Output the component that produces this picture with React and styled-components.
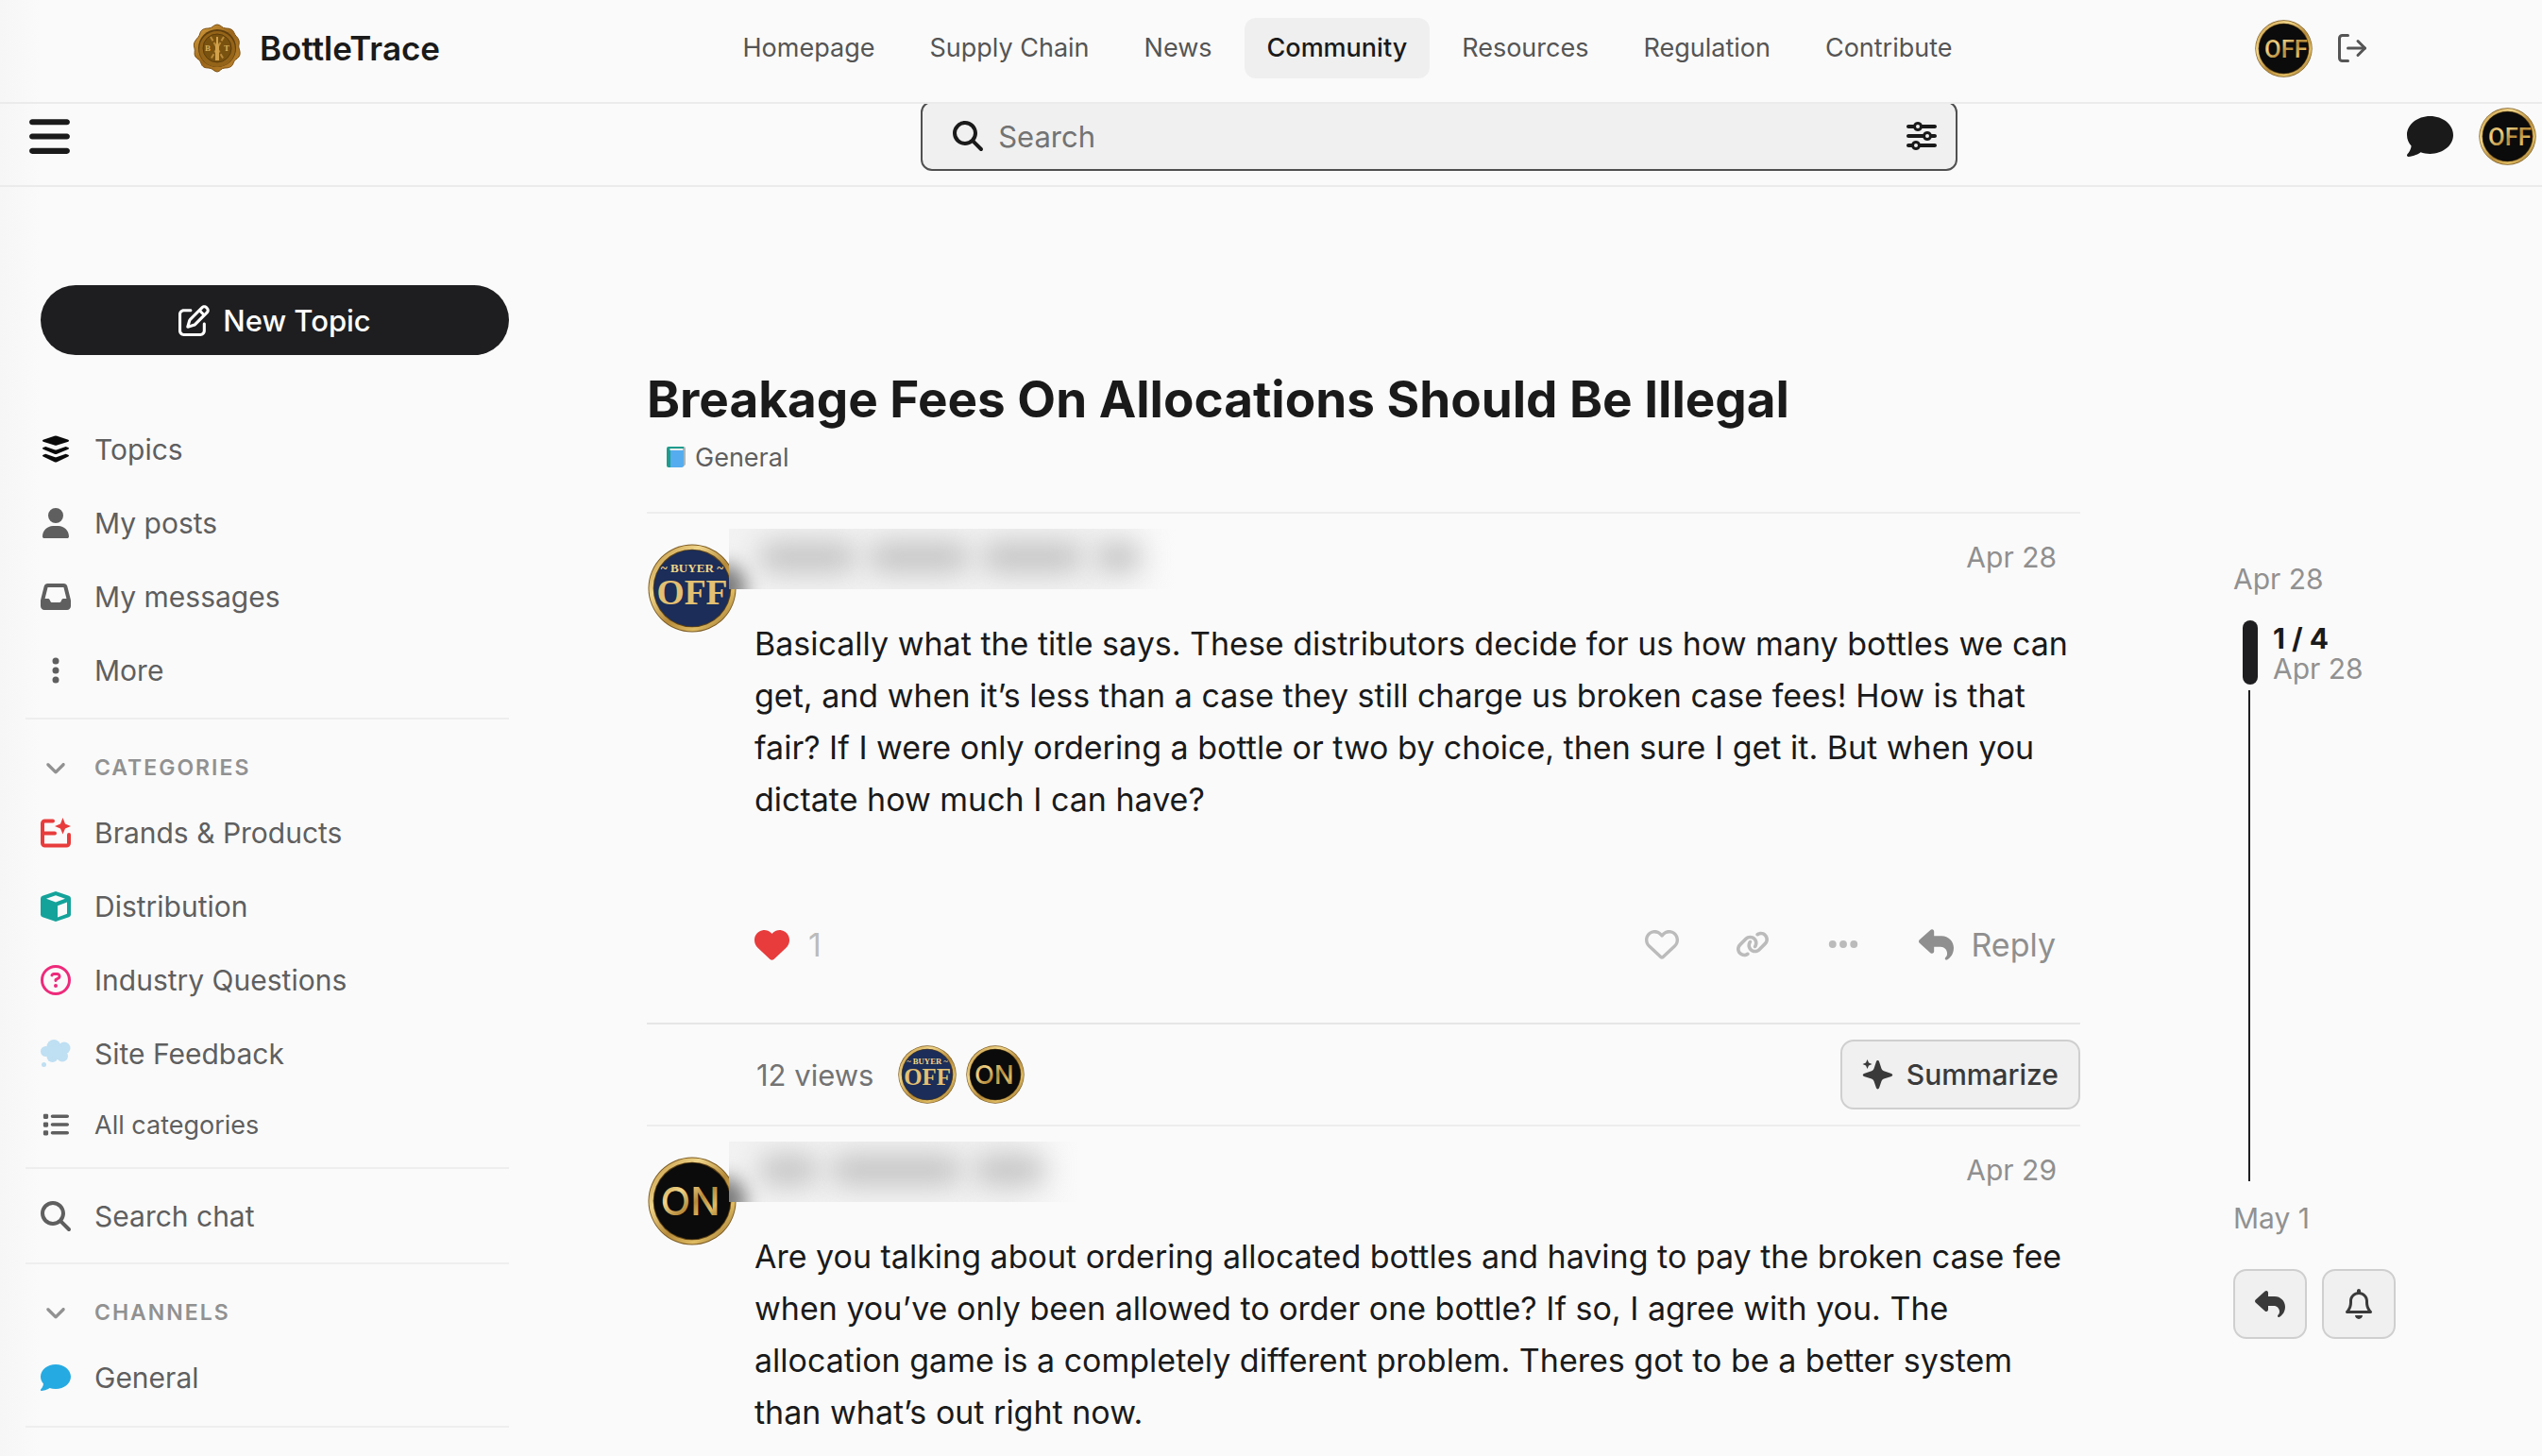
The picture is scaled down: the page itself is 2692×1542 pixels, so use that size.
import React, { useId, useState } from "react";
import styled, { createGlobalStyle } from "styled-components";
import { LogOut } from "lucide-react";
import {
  FaAngleDown,
  FaBars,
  FaComment,
  FaEllipsis,
  FaEllipsisVertical,
  FaHeart,
  FaInbox,
  FaLink,
  FaList,
  FaMagnifyingGlass,
  FaRegBell,
  FaRegCircleQuestion,
  FaRegHeart,
  FaRegPenToSquare,
  FaReply,
  FaSliders,
  FaUser,
} from "react-icons/fa6";

const GlobalStyle = createGlobalStyle`
  *, *::before, *::after {
    box-sizing: border-box;
  }
  body {
    margin: 0;
    background: #fafafa;
    color: #1a1a1a;
    font-family: Inter, "Liberation Sans", sans-serif;
    font-size: 30px;
  }
  button, input {
    font: inherit;
    color: inherit;
  }
  button {
    padding: 0;
    border: 0;
    background: none;
    cursor: pointer;
  }
  a {
    color: inherit;
    text-decoration: none;
  }
  svg {
    display: block;
    flex-shrink: 0;
  }
`;

const Page = styled.div`
  min-height: 100vh;
  background: linear-gradient(to right, #f6f6f6, #fafafa 42px);
`;

const SiteHeader = styled.header`
  position: relative;
  z-index: 2;
  display: flex;
  align-items: center;
  justify-content: space-between;
  height: 110px;
  padding: 0 167px 6px 204px;
  border-bottom: 2px solid #ebebeb;
  background: linear-gradient(to right, #f6f6f6, #fafafa 42px);
`;

const Brand = styled.a`
  display: flex;
  align-items: center;
  gap: 19px;
  font-size: 35px;
  font-weight: 600;
`;

const SiteNav = styled.nav`
  display: flex;
  gap: 10px;
`;

const NavLink = styled.a`
  padding: 0 24px;
  border-radius: 12px;
  background: ${({ $active }) => ($active ? "#efefef" : "transparent")};
  color: ${({ $active }) => ($active ? "#1a1a1a" : "#555")};
  font-size: 27px;
  font-weight: ${({ $active }) => ($active ? 500 : 400)};
  line-height: 64px;
`;

const SiteUser = styled.div`
  display: flex;
  align-items: center;
  gap: 8px;
`;

const LogoutButton = styled.button`
  padding: 14px 16px;
  color: #555;
`;

const ForumHeader = styled.header`
  display: flex;
  align-items: center;
  justify-content: space-between;
  height: 88px;
  padding: 0 6px 18px 28px;
  border-bottom: 2px solid #ebebeb;
`;

const HeaderSide = styled.div`
  flex: ${({ $grow }) => $grow} 1 0;
  display: flex;
  align-items: center;
  justify-content: ${({ $end }) => ($end ? "flex-end" : "flex-start")};
  gap: 27px;
`;

const SearchBox = styled.form`
  flex: 0 1 1098px;
  display: flex;
  align-items: center;
  gap: 16px;
  height: 74px;
  padding: 0 20px 0 32px;
  border: 2px solid #505050;
  border-radius: 12px;
  background: #f0f0f0;
`;

const SearchInput = styled.input`
  flex: 1;
  min-width: 0;
  padding: 0;
  border: 0;
  outline: 0;
  background: none;
  font-size: 31px;
  &::placeholder {
    color: #737373;
    opacity: 1;
  }
`;

const Layout = styled.div`
  display: grid;
  grid-template-columns: 539px 1fr;
`;

const Sidebar = styled.aside`
  padding: 104px 0 0 27px;
`;

const NewTopicButton = styled.button`
  display: flex;
  align-items: center;
  justify-content: center;
  gap: 14px;
  width: calc(100% - 16px);
  height: 74px;
  margin: 0 0 61px 16px;
  border-radius: 37px;
  background: #1e1e20;
  color: #fff;
  font-size: 31px;
  font-weight: 500;
`;

const SidebarSection = styled.section`
  padding: ${({ $pad }) => $pad || "0"};
  border-bottom: 2px solid #eee;
`;

const SidebarHeading = styled.button`
  display: grid;
  grid-template-columns: 32px 1fr;
  align-items: center;
  gap: 25px;
  width: 100%;
  height: 60px;
  padding-left: 16px;
  color: #919191;
  font-size: 23px;
  font-weight: 600;
  letter-spacing: 2px;
  text-align: left;
  text-transform: uppercase;
`;

const SidebarLink = styled.a`
  display: grid;
  grid-template-columns: 32px 1fr;
  align-items: center;
  gap: 25px;
  height: ${({ $small }) => ($small ? "72px" : "78px")};
  padding-left: 16px;
  color: #5f5f5f;
  font-size: ${({ $small }) => ($small ? "27px" : "30px")};
`;

const IconSlot = styled.span`
  display: flex;
  justify-content: center;
  color: ${({ $color }) => $color || "inherit"};
`;

const Main = styled.main`
  display: grid;
  grid-template-columns: 1fr 172px;
  gap: 162px;
  padding: 0 155px 0 146px;
`;

const Topic = styled.article`
  min-width: 0;
  padding-top: 189px;
`;

const TopicTitle = styled.h1`
  margin: 0;
  font-size: 53px;
  font-weight: 700;
  line-height: 72px;
`;

const Category = styled.a`
  display: flex;
  align-items: center;
  gap: 10px;
  height: 36px;
  margin: 7px 0 40px 21px;
  color: #5f5f5f;
  font-size: 27px;
`;

const Post = styled.section`
  display: grid;
  grid-template-columns: 95px 1fr;
  gap: 19px;
  border-top: 2px solid #ededed;
`;

const AvatarLink = styled.a`
  display: flex;
  justify-content: flex-end;
  padding-top: 32px;
`;

const PostMain = styled.div`
  min-width: 0;
  padding-top: 16px;
`;

const PostMeta = styled.div`
  display: flex;
  justify-content: space-between;
  height: 64px;
  padding-right: 25px;
  color: #8f8f8f;
  line-height: 60px;
`;

const HiddenName = styled.div`
  position: relative;
  display: flex;
  align-items: center;
  gap: 12px;
  margin-left: -27px;
  padding: 0 36px 4px 31px;
  overflow: hidden;
  background: linear-gradient(to right, #f2f2f2 80%, #fafafa);
  &::before {
    content: "";
    position: absolute;
    left: -26px;
    bottom: -22px;
    width: 44px;
    height: 48px;
    border-radius: 50%;
    background: #777;
    filter: blur(10px);
  }
`;

const HiddenWord = styled.span`
  width: ${({ $width }) => $width}px;
  height: 34px;
  border-radius: 17px;
  background: #c6c6c6;
  filter: blur(14px);
`;

const PostBody = styled.p`
  margin: 30px 0 0;
  padding-right: 8px;
  font-size: 34px;
  line-height: 55px;
`;

const PostActions = styled.div`
  display: flex;
  align-items: center;
  height: 54px;
  margin: 99px 0 56px;
  padding-right: 26px;
  color: #bbb;
`;

const Likes = styled.button`
  display: flex;
  align-items: center;
  gap: 20px;
  margin-right: auto;
  font-size: 34px;
`;

const ActionButton = styled.button`
  display: flex;
  align-items: center;
  justify-content: center;
  width: 96px;
  height: 54px;
`;

const ReplyButton = styled.button`
  display: flex;
  align-items: center;
  gap: 18px;
  margin-left: 32px;
  color: #8f8f8f;
  font-size: 34px;
`;

const TopicStats = styled.div`
  display: flex;
  align-items: center;
  gap: 10px;
  padding: 16px 0 16px 116px;
  border-top: 2px solid #e6e6e6;
  color: #737373;
`;

const Views = styled.span`
  margin-right: 16px;
  font-size: 31px;
`;

const SummarizeButton = styled.button`
  display: flex;
  align-items: center;
  gap: 14px;
  height: 74px;
  margin-left: auto;
  padding: 0 21px;
  border: 2px solid #cfcfcf;
  border-radius: 14px;
  background: #f0f0f0;
  color: #3a3a3a;
  font-weight: 500;
`;

const Timeline = styled.aside`
  padding-top: 396px;
  color: #919191;
  line-height: 38px;
`;

const TimelineDate = styled.a`
  display: block;
`;

const Scroller = styled.div`
  display: flex;
  gap: 16px;
  height: 68px;
  margin: 25px 0 6px 10px;
  line-height: 32px;
`;

const ScrollerHandle = styled.div`
  width: 16px;
  border-radius: 8px;
  background: #1e1e20;
`;

const ScrollerText = styled.div`
  padding-top: 3px;
  strong {
    display: block;
    color: #1a1a1a;
    font-weight: 700;
  }
`;

const Track = styled.div`
  width: 2px;
  height: 520px;
  margin: 0 0 20px 16px;
  background: #1e1e20;
`;

const TimelineButtons = styled.div`
  display: grid;
  grid-template-columns: 1fr 1fr;
  gap: 16px;
  margin-top: 35px;
`;

const TimelineButton = styled.button`
  display: flex;
  align-items: center;
  justify-content: center;
  height: 74px;
  border: 2px solid #cfcfcf;
  border-radius: 14px;
  background: #f0f0f0;
  color: #3a3a3a;
`;

// Gold rimmed coin used for every user picture
function Avatar({ kind, size }) {
  const id = useId();
  const gold = `url(#${id})`;
  return (
    <svg width={size} height={size} viewBox="0 0 100 100" role="img" aria-label={`${kind} avatar`}>
      <defs>
        <linearGradient id={id} x1="0" y1="0" x2="1" y2="1">
          <stop offset="0" stopColor="#b98a35" />
          <stop offset="0.3" stopColor="#f0d58a" />
          <stop offset="0.55" stopColor="#b58a3a" />
          <stop offset="0.75" stopColor="#dfbb62" />
          <stop offset="1" stopColor="#8a6220" />
        </linearGradient>
      </defs>
      <circle cx="50" cy="50" r="49.5" fill="#7b5a22" />
      <circle cx="50" cy="50" r="48.5" fill={gold} />
      <circle cx="50" cy="50" r="44" fill="#5e4214" />
      <circle cx="50" cy="50" r="43" fill={kind === "buyer" ? "#1b2d58" : "#0b0b0b"} />
      {kind === "buyer" && (
        <g fill="#f0d488" fontFamily="Liberation Serif, serif" fontWeight="700" textAnchor="middle">
          <text x="50" y="32" fontSize="14">~ BUYER ~</text>
          <text x="50" y="68" fontSize="40" fill="#e3c072">OFF</text>
        </g>
      )}
      {kind === "off" && (
        <text x="54" y="65" fontSize="42" fontFamily="Roboto, sans-serif" fontWeight="500" textAnchor="middle" fill={gold}>
          OFF
        </text>
      )}
      {kind === "on" && (
        <text x="48" y="66" fontSize="44" fontFamily="Inter, sans-serif" fontWeight="500" textAnchor="middle" fill={gold}>
          ON
        </text>
      )}
    </svg>
  );
}

function SealLogo() {
  return (
    <svg width="52" height="52" viewBox="0 0 52 52" aria-hidden="true">
      <defs>
        <linearGradient id="seal" x1="0" y1="0" x2="1" y2="1">
          <stop offset="0" stopColor="#d9a343" />
          <stop offset="0.5" stopColor="#9a6519" />
          <stop offset="1" stopColor="#c08830" />
        </linearGradient>
      </defs>
      <path
        d="M26 1c4 0 5 4 9 4s8 1 9 5c1 3 4 4 5 8s-1 5 0 8 2 6 0 9-5 3-6 7-5 5-9 5-5 4-8 4-5-4-9-4-7-1-8-5-4-4-6-7 0-6-1-9-1-5 1-8 4-4 5-8 5-5 9-5 5-4 9-4z"
        fill="url(#seal)"
        stroke="#7b4f10"
        strokeWidth="1"
      />
      <circle cx="26" cy="26" r="20" fill="#5f3f0e" />
      <circle cx="26" cy="27" r="19" fill="#946419" />
      <circle cx="26" cy="26" r="15" fill="#7a520f" stroke="#5d3d0b" strokeWidth="1" />
      <path d="M19 14l14 24M33 14L19 38" stroke="#b98a3a" strokeWidth="2" strokeDasharray="5 2" />
      <path d="M24 39V24l1-4v-6h2v6l1 4v15z" fill="#d3a14a" />
      <g fill="#d9ac58" fontFamily="Liberation Serif, serif" fontWeight="700" fontSize="9">
        <text x="13" y="29">B</text>
        <text x="33" y="29">T</text>
      </g>
    </svg>
  );
}

function LayersIcon() {
  return (
    <svg width="32" height="32" viewBox="40 28 96 96" fill="currentColor" aria-hidden="true">
      <path d="M84 33.500q4-1.500 8 0l36 12q5 3 0 6L92 62.500q-4 1.500-8 0L48 51.500q-5-3 0-6z" />
      <path d="M56 67l28 10q4 1.500 8 0l28-10 8 3q5 2.500 0 5.500L92 90q-4 1.500-8 0L48 75.500q-5-3 0-5.500z" />
      <path d="M56 90l28 10q4 1.500 8 0l28-10 8 3q5 2.500 0 5.500L92 116q-4 1.500-8 0L48 98.500q-5-3 0-5.500z" />
    </svg>
  );
}

function BrandsIcon() {
  return (
    <svg width="32" height="32" viewBox="0 0 32 32" aria-hidden="true">
      <path
        d="M13 3.500H4.500a2.500 2.500 0 0 0-2.500 2.500v21a2.500 2.500 0 0 0 2.500 2.500h23a2.500 2.500 0 0 0 2.500-2.500V18M2 16.500h13"
        fill="none"
        stroke="#e83c3c"
        strokeWidth="4"
        strokeLinecap="round"
        strokeLinejoin="round"
      />
      <path d="M23.500 0l2.500 6.500 6 2.500-6 2.500-2.500 6-2.500-6L15 9l6-2.500z" fill="#e83c3c" />
    </svg>
  );
}

function CubeIcon() {
  return (
    <svg width="32" height="32" viewBox="0 0 32 32" aria-hidden="true">
      <path
        d="M16 0l14 4.800a3 3 0 0 1 2 2.800v16.800a3 3 0 0 1-2 2.800L16 32 2 27.200a3 3 0 0 1-2-2.800V7.600a3 3 0 0 1 2-2.800z"
        fill="#14a39a"
      />
      <path d="M16 4.200l10 3.600-10 3.700L6 7.800z" fill="#fafafa" />
      <path d="M18 15.200l10-3.600v12.200l-10 3.600z" fill="#fafafa" />
    </svg>
  );
}

function ThoughtIcon() {
  return (
    <svg width="32" height="32" viewBox="0 0 32 32" fill="#bfdff2" aria-hidden="true">
      <circle cx="14" cy="8.500" r="7.500" />
      <circle cx="5.500" cy="13.500" r="5.500" />
      <circle cx="25" cy="10" r="6.500" />
      <circle cx="23" cy="18.500" r="6" />
      <circle cx="12.500" cy="19" r="6" />
      <circle cx="16" cy="14" r="8" />
      <circle cx="3.500" cy="27.500" r="2.500" />
    </svg>
  );
}

function BookIcon() {
  return (
    <svg width="20" height="22" viewBox="0 0 20 22" aria-hidden="true">
      <path d="M2 0h16a2 2 0 0 1 2 2v17l-2 2H2z" fill="#a9b8bf" />
      <path d="M3 2h14v3H3z" fill="#e8edf0" />
      <path d="M3 4h15v16a2 2 0 0 1-2 2H3z" fill="#55acee" />
      <path d="M2 0a2 2 0 0 0-2 2v18a2 2 0 0 0 2 2h2V4c-1 0-1-2 0-2h14V0z" fill="#1f9c8c" />
    </svg>
  );
}

function SparklesIcon() {
  return (
    <svg width="33" height="32" viewBox="0 0 33 32" fill="currentColor" aria-hidden="true">
      <path d="M16.500 1c1 0 1.300.600 1.600 1.500l2.400 7.200c.500 1.300 1.200 2 2.500 2.500l8 2.700c1.700.600 1.700 2.400 0 3l-8 2.500c-1.300.500-2 1.200-2.500 2.500l-2.400 7.200c-.600 1.800-2.600 1.800-3.200 0l-2.400-7.200c-.500-1.300-1.200-2-2.500-2.500l-8-2.500c-1.700-.600-1.700-2.400 0-3l8-2.700c1.300-.500 2-1.200 2.500-2.500l2.400-7.200C15.200 1.600 15.500 1 16.500 1z" />
      <path d="M5.500 0l1.500 3.500L10.500 5 7 6.500 5.500 10 4 6.500.500 5 4 3.500z" />
    </svg>
  );
}

const NAV = ["Homepage", "Supply Chain", "News", "Community", "Resources", "Regulation", "Contribute"];

const MAIN_LINKS = [
  { label: "Topics", icon: <LayersIcon />, color: "#0a0a0a" },
  { label: "My posts", icon: <FaUser size={32} /> },
  { label: "My messages", icon: <FaInbox size={32} /> },
  { label: "More", icon: <FaEllipsisVertical size={32} /> },
];

const CATEGORIES = [
  { label: "Brands & Products", icon: <BrandsIcon /> },
  { label: "Distribution", icon: <CubeIcon /> },
  { label: "Industry Questions", icon: <FaRegCircleQuestion size={32} />, color: "#ee2a7b" },
  { label: "Site Feedback", icon: <ThoughtIcon /> },
  { label: "All categories", icon: <FaList size={28} />, small: true },
];

const FIRST_POST =
  "Basically what the title says. These distributors decide for us how many bottles we can get, and when it’s less than a case they still charge us broken case fees! How is that fair? If I were only ordering a bottle or two by choice, then sure I get it. But when you dictate how much I can have?";

const SECOND_POST =
  "Are you talking about ordering allocated bottles and having to pay the broken case fee when you’ve only been allowed to order one bottle? If so, I agree with you. The allocation game is a completely different problem. Theres got to be a better system than what’s out right now.";

function SidebarItem({ label, icon, color, small }) {
  return (
    <SidebarLink href="#" $small={small}>
      <IconSlot $color={color}>{icon}</IconSlot>
      {label}
    </SidebarLink>
  );
}

function PostHead({ words, date }) {
  return (
    <PostMeta>
      <HiddenName aria-label="Hidden name">
        {words.map((width, idx) => (
          <HiddenWord key={idx} $width={width} />
        ))}
      </HiddenName>
      <a href="#">{date}</a>
    </PostMeta>
  );
}

function App() {
  const [query, setQuery] = useState("");

  return (
    <>
      <GlobalStyle />
      <Page>
        <SiteHeader>
          <Brand href="#">
            <SealLogo />
            BottleTrace
          </Brand>
          <SiteNav>
            {NAV.map((item) => (
              <NavLink key={item} href="#" $active={item === "Community"}>
                {item}
              </NavLink>
            ))}
          </SiteNav>
          <SiteUser>
            <a href="#">
              <Avatar kind="off" size={61} />
            </a>
            <LogoutButton aria-label="Log out">
              <LogOut size={36} />
            </LogoutButton>
          </SiteUser>
        </SiteHeader>

        <ForumHeader>
          <HeaderSide $grow={17}>
            <button aria-label="Toggle sidebar">
              <FaBars size={49} />
            </button>
          </HeaderSide>
          <SearchBox onSubmit={(e) => e.preventDefault()}>
            <FaMagnifyingGlass size={32} />
            <SearchInput
              aria-label="Search"
              placeholder="Search"
              value={query}
              onChange={(e) => setQuery(e.target.value)}
            />
            <button type="button" aria-label="Advanced search">
              <FaSliders size={32} />
            </button>
          </SearchBox>
          <HeaderSide $grow={11} $end>
            <button aria-label="Chat">
              <FaComment size={49} />
            </button>
            <a href="#">
              <Avatar kind="off" size={61} />
            </a>
          </HeaderSide>
        </ForumHeader>

        <Layout>
          <Sidebar>
            <NewTopicButton>
              <FaRegPenToSquare size={33} />
              New Topic
            </NewTopicButton>
            <SidebarSection $pad="0 0 11px">
              {MAIN_LINKS.map((item) => (
                <SidebarItem key={item.label} {...item} />
              ))}
            </SidebarSection>
            <SidebarSection $pad="21px 0 9px">
              <SidebarHeading>
                <IconSlot>
                  <FaAngleDown size={26} />
                </IconSlot>
                Categories
              </SidebarHeading>
              {CATEGORIES.map((item) => (
                <SidebarItem key={item.label} {...item} />
              ))}
            </SidebarSection>
            <SidebarSection $pad="11px 0 10px">
              <SidebarItem label="Search chat" icon={<FaMagnifyingGlass size={32} />} />
            </SidebarSection>
            <SidebarSection $pad="21px 0 12px">
              <SidebarHeading>
                <IconSlot>
                  <FaAngleDown size={26} />
                </IconSlot>
                Channels
              </SidebarHeading>
              <SidebarItem label="General" icon={<FaComment size={32} />} color="#25aae2" />
            </SidebarSection>
          </Sidebar>

          <Main>
            <Topic>
              <TopicTitle>Breakage Fees On Allocations Should Be Illegal</TopicTitle>
              <Category href="#">
                <BookIcon />
                General
              </Category>

              <Post>
                <AvatarLink href="#">
                  <Avatar kind="buyer" size={94} />
                </AvatarLink>
                <PostMain>
                  <PostHead words={[104, 108, 108, 50]} date="Apr 28" />
                  <PostBody>{FIRST_POST}</PostBody>
                  <PostActions>
                    <Likes aria-label="1 like">
                      <FaHeart size={37} color="#e83c3c" />
                      1
                    </Likes>
                    <ActionButton aria-label="Like">
                      <FaRegHeart size={36} />
                    </ActionButton>
                    <ActionButton aria-label="Copy link">
                      <FaLink size={36} />
                    </ActionButton>
                    <ActionButton aria-label="Show more">
                      <FaEllipsis size={36} />
                    </ActionButton>
                    <ReplyButton>
                      <FaReply size={37} />
                      Reply
                    </ReplyButton>
                  </PostActions>
                </PostMain>
              </Post>

              <TopicStats>
                <Views>12 views</Views>
                <Avatar kind="buyer" size={62} />
                <Avatar kind="on" size={62} />
                <SummarizeButton>
                  <SparklesIcon />
                  Summarize
                </SummarizeButton>
              </TopicStats>

              <Post>
                <AvatarLink href="#">
                  <Avatar kind="on" size={94} />
                </AvatarLink>
                <PostMain>
                  <PostHead words={[64, 140, 76]} date="Apr 29" />
                  <PostBody>{SECOND_POST}</PostBody>
                </PostMain>
              </Post>
            </Topic>

            <Timeline>
              <TimelineDate href="#">Apr 28</TimelineDate>
              <Scroller>
                <ScrollerHandle />
                <ScrollerText>
                  <strong>1 / 4</strong>
                  Apr 28
                </ScrollerText>
              </Scroller>
              <Track />
              <TimelineDate href="#">May 1</TimelineDate>
              <TimelineButtons>
                <TimelineButton aria-label="Reply">
                  <FaReply size={32} />
                </TimelineButton>
                <TimelineButton aria-label="Notifications">
                  <FaRegBell size={32} />
                </TimelineButton>
              </TimelineButtons>
            </Timeline>
          </Main>
        </Layout>
      </Page>
    </>
  );
}

export default App;
